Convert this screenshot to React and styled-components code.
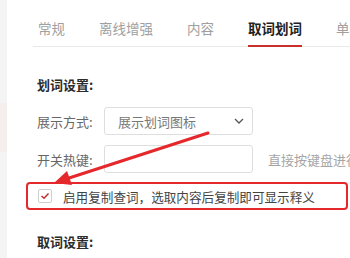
import styled, { createGlobalStyle } from 'styled-components';

const GlobalStyle = createGlobalStyle`
  html, body {
    margin: 0;
    padding: 0;
    background: #ffffff;
  }
  body {
    font-family: "Noto Sans CJK SC", "Noto Sans", sans-serif;
    color: #333;
  }
`;

const Page = styled.div`
  width: 350px;
  height: 258px;
  display: flex;
  overflow: hidden;
  position: relative;
`;

const Sidebar = styled.div`
  width: 7px;
  flex-shrink: 0;
  background-color: #f4f4f4;
  padding-top: 103px;
`;

const SideActive = styled.div`
  height: 49px;
  background-color: #f6eded;
`;

const Main = styled.div`
  flex: 1;
  padding-left: 26px;
  min-width: 0;
`;

const TabBar = styled.div`
  height: 46px;
  display: flex;
  align-items: flex-end;
  gap: 34px;
  padding-left: 5px;
  border-bottom: 1px solid #e9e9e9;
  white-space: nowrap;
`;

const Tab = styled.div`
  font-size: 13.5px;
  line-height: 20px;
  padding-bottom: 7px;
  margin-bottom: -1px;
  color: ${(p) => (p.$active ? '#222' : '#a0a0a0')};
  font-weight: ${(p) => (p.$active ? 700 : 400)};
  border-bottom: 2px solid ${(p) => (p.$active ? '#c9302c' : 'transparent')};
`;

const Content = styled.div`
  padding-left: 4px;
`;

const SectionTitle = styled.div`
  font-size: 13px;
  line-height: 20px;
  font-weight: 700;
  color: #2b2b2b;
  margin-top: ${(p) => p.$top}px;
`;

const Row = styled.div`
  display: flex;
  align-items: center;
  margin-top: ${(p) => p.$top}px;
  white-space: nowrap;
`;

const Label = styled.div`
  width: 67px;
  flex-shrink: 0;
  font-size: 13px;
  color: #666;
`;

const Field = styled.div`
  width: 149px;
  height: 28px;
  box-sizing: border-box;
  border: 1px solid #dedede;
  border-radius: 3px;
  display: flex;
  align-items: center;
  justify-content: space-between;
  padding: 0 8px 0 13px;
  flex-shrink: 0;
  font-size: 13px;
  color: #777;
`;

const Hint = styled.div`
  margin-left: 15px;
  font-size: 13px;
  color: #a5a5a5;
`;

const Highlight = styled.div`
  margin-top: 9px;
  margin-left: -11px;
  width: 322px;
  height: 28px;
  box-sizing: border-box;
  border: 2px solid #e5282c;
  border-radius: 4px;
  display: flex;
  align-items: center;
  padding-left: 10px;
  white-space: nowrap;
`;

const Check = styled.div`
  width: 14px;
  height: 14px;
  box-sizing: border-box;
  border: 1px solid #cfcfcf;
  border-radius: 2px;
  display: flex;
  align-items: center;
  justify-content: center;
  flex-shrink: 0;
`;

const CheckText = styled.div`
  margin-left: 11px;
  font-size: 12.6px;
  color: #444;
`;

const ArrowLayer = styled.svg`
  position: absolute;
  left: 0;
  top: 0;
  pointer-events: none;
`;

const tabs = ['常规', '离线增强', '内容', '取词划词', '单词本'];

export default function App() {
  return (
    <>
      <GlobalStyle />
      <Page>
        <Sidebar>
          <SideActive />
        </Sidebar>
        <Main>
          <TabBar>
            {tabs.map((t) => (
              <Tab key={t} $active={t === '取词划词'}>
                {t}
              </Tab>
            ))}
          </TabBar>
          <Content>
            <SectionTitle $top={28}>划词设置:</SectionTitle>
            <Row $top={12}>
              <Label>展示方式:</Label>
              <Field>
                展示划词图标
                <svg width="10" height="6" viewBox="0 0 10 6">
                  <path d="M1 1 L5 5 L9 1" fill="none" stroke="#555" strokeWidth="1.3" />
                </svg>
              </Field>
            </Row>
            <Row $top={10}>
              <Label>开关热键:</Label>
              <Field />
              <Hint>直接按键盘进行设置</Hint>
            </Row>
            <Highlight>
              <Check>
                <svg width="10" height="8" viewBox="0 0 10 8">
                  <path d="M1.5 4 L4 6.3 L8.5 1.5" fill="none" stroke="#c9302c" strokeWidth="1.5" />
                </svg>
              </Check>
              <CheckText>启用复制查词，选取内容后复制即可显示释义</CheckText>
            </Highlight>
            <SectionTitle $top={22}>取词设置:</SectionTitle>
          </Content>
        </Main>
        <ArrowLayer width="350" height="258" viewBox="0 0 350 258">
          <line x1="208" y1="133" x2="66" y2="179" stroke="#e5282c" strokeWidth="3" strokeLinecap="round" />
          <polygon points="54,183 67,171 72,185" fill="#e5282c" />
        </ArrowLayer>
      </Page>
    </>
  );
}
